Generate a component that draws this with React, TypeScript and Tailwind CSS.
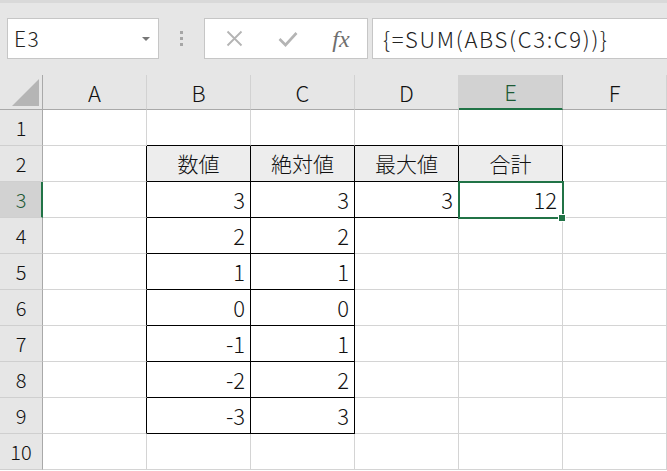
import React from "react";

const COLS = ["A", "B", "C", "D", "E", "F"];
const ROWS = [1, 2, 3, 4, 5, 6, 7, 8, 9, 10];

// cell content keyed by row + column
const DATA: Record<string, string> = {
  "2B": "数値",
  "2C": "絶対値",
  "2D": "最大値",
  "2E": "合計",
  "3B": "3",
  "3C": "3",
  "3D": "3",
  "3E": "12",
  "4B": "2",
  "4C": "2",
  "5B": "1",
  "5C": "1",
  "6B": "0",
  "6C": "0",
  "7B": "-1",
  "7C": "1",
  "8B": "-2",
  "8C": "2",
  "9B": "-3",
  "9C": "3",
};

function inTable(r: number, c: string) {
  if (r >= 2 && r <= 9 && (c === "B" || c === "C")) return true;
  if (r >= 2 && r <= 3 && (c === "D" || c === "E")) return true;
  return false;
}

const font = "font-['Noto_Sans_CJK_JP','Noto_Sans',sans-serif]";

function Cell({ r, c, ci }: { r: number; c: string; ci: number }) {
  const next = COLS[ci + 1];
  const right = inTable(r, c) || (next ? inTable(r, next) : false);
  const bottom = inTable(r, c) || inTable(r + 1, c);
  const text = DATA[`${r}${c}`];
  const head = r === 2 && inTable(r, c);
  return (
    <div
      className={`flex h-[36px] items-center border-r border-b ${
        right ? "border-r-black" : "border-r-[#d4d4d4]"
      } ${bottom ? "border-b-black" : "border-b-[#d4d4d4]"} ${
        head ? "justify-center bg-[#ededed] text-[21px]" : "justify-end bg-white pr-[5px] text-[22px]"
      } font-light text-[#111]`}
    >
      {text}
    </div>
  );
}

export default function App() {
  return (
    <div className={`h-[471px] w-[667px] overflow-hidden bg-white ${font}`}>
      {/* toolbar */}
      <div className="h-[75px] border-t-[3px] border-[#d9d9d9] bg-[#e6e6e6] pt-[15px]">
        <div className="flex h-[41px] items-stretch">
          <div className="ml-[7px] flex w-[152px] items-center justify-between border border-[#c6c6c6] bg-white pl-[6px] pr-[8px]">
            <span className="text-[21px] font-light tracking-[1.5px] text-[#222]">E3</span>
            <span className="mt-[1px] h-0 w-0 border-x-[4px] border-t-[4px] border-x-transparent border-t-[#777]" />
          </div>
          <div className="flex w-[45px] flex-col items-center justify-center gap-[3px]">
            <span className="h-[3px] w-[3px] bg-[#a6a6a6]" />
            <span className="h-[3px] w-[3px] bg-[#a6a6a6]" />
            <span className="h-[3px] w-[3px] bg-[#a6a6a6]" />
          </div>
          <div className="flex w-[164px] items-center border border-[#c6c6c6] bg-white">
            <div className="flex w-[56px] justify-center pl-[2px]">
              <svg width="17" height="17" viewBox="0 0 17 17">
                <path d="M1.5 1.5 L15.5 15.5 M15.5 1.5 L1.5 15.5" stroke="#b4b4b4" strokeWidth="1.8" fill="none" />
              </svg>
            </div>
            <div className="flex w-[54px] justify-center">
              <svg width="20" height="16" viewBox="0 0 20 16">
                <path d="M1.5 8 L7.5 14 L18.5 2" stroke="#b4b4b4" strokeWidth="2.6" fill="none" />
              </svg>
            </div>
            <div className="flex w-[52px] justify-center">
              <span className="font-['Liberation_Serif',serif] text-[24px] italic leading-none text-[#6e6e6e]">
                fx
              </span>
            </div>
          </div>
          <div className="ml-[4px] flex flex-1 items-center border-y border-l border-[#c6c6c6] bg-white pl-[10px]">
            <span className="text-[22px] font-light tracking-[1.7px] text-[#222]">{"{=SUM(ABS(C3:C9))}"}</span>
          </div>
        </div>
      </div>

      {/* grid */}
      <div className="relative grid grid-cols-[43px_104px_104px_104px_104px_104px_104px]">
        {/* column header row */}
        <div className="relative h-[35px] border-r border-b border-[#a9a9a9] bg-[#e6e6e6]">
          <svg className="absolute left-[12px] top-[4px]" width="27" height="27" viewBox="0 0 27 27">
            <polygon points="27,0 27,27 0,27" fill="#b5b5b5" />
          </svg>
        </div>
        {COLS.map((c) => (
          <div
            key={c}
            className={`flex h-[35px] items-center justify-center border-r text-[22px] font-light ${
              c === "E"
                ? "border-b-2 border-r-[#b8b8b8] border-b-[#217346] bg-[#d2d2d2] text-[#1e5a36]"
                : "border-b border-r-[#d2d2d2] border-b-[#a9a9a9] bg-[#e6e6e6] text-[#111]"
            }`}
          >
            {c}
          </div>
        ))}

        {ROWS.map((r) => (
          <React.Fragment key={r}>
            <div
              className={`flex h-[36px] items-center justify-center border-b border-b-[#cfcfcf] text-[20px] font-light ${
                r === 3
                  ? "border-r-2 border-r-[#217346] bg-[#d2d2d2] pl-[1px] text-[#1e5a36]"
                  : "border-r border-r-[#a9a9a9] bg-[#e6e6e6] text-[#111]"
              }`}
            >
              {r}
            </div>
            {COLS.map((c, ci) => (
              <Cell key={c} r={r} c={c} ci={ci} />
            ))}
          </React.Fragment>
        ))}

        {/* active cell E3 */}
        <div className="pointer-events-none absolute left-[458px] top-[106px] h-[38px] w-[106px] border-2 border-[#217346]" />
        <div className="pointer-events-none absolute left-[558px] top-[139px] h-[8px] w-[8px] border border-white bg-[#217346]" />
      </div>
    </div>
  );
}
